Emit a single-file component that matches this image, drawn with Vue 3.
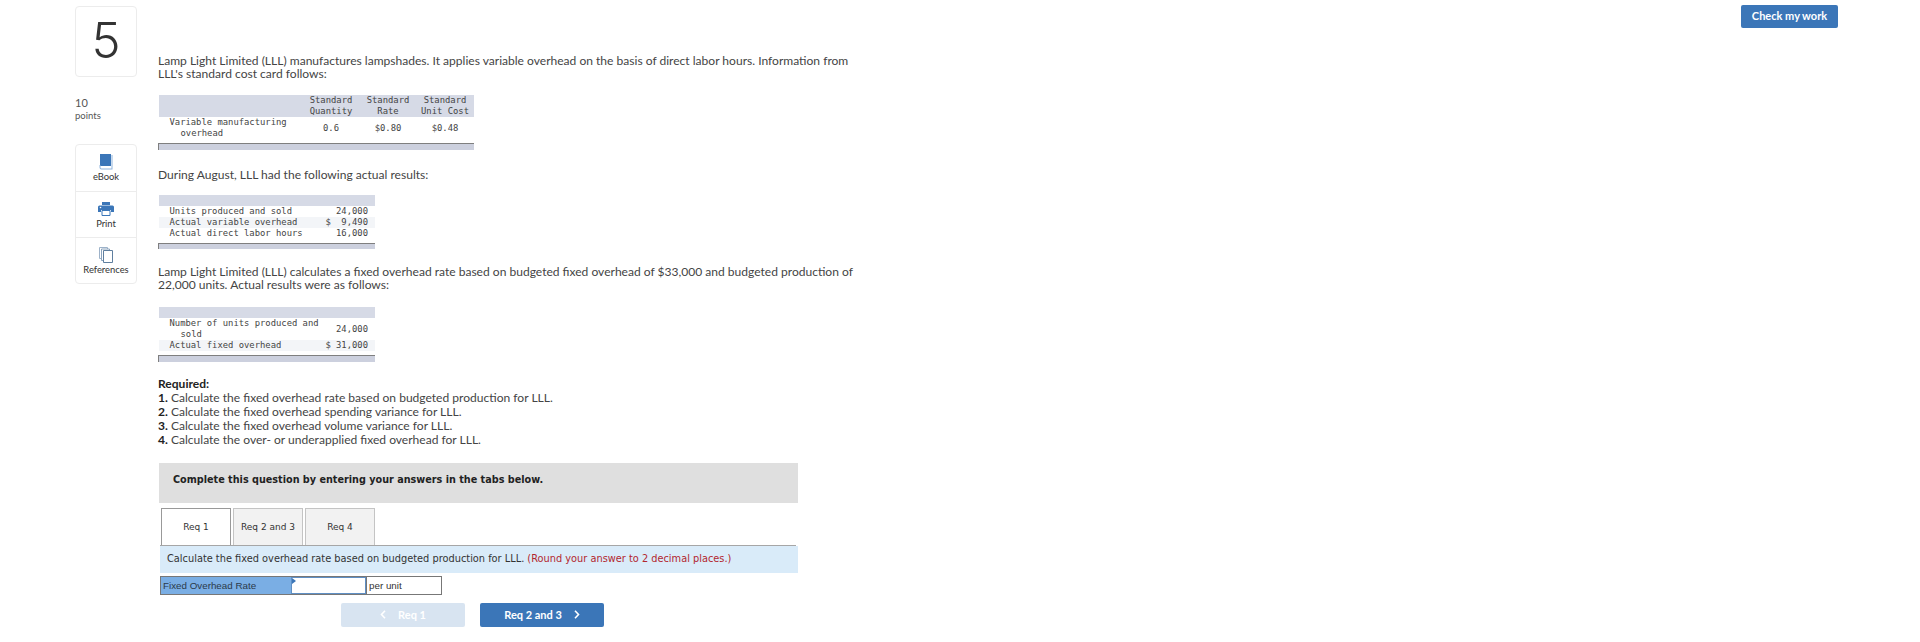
<script setup>
const tools = [
  { name: 'eBook', icon: 'book' },
  { name: 'Print', icon: 'print' },
  { name: 'References', icon: 'refs' },
];
const requirements = [
  'Calculate the fixed overhead rate based on budgeted production for LLL.',
  'Calculate the fixed overhead spending variance for LLL.',
  'Calculate the fixed overhead volume variance for LLL.',
  'Calculate the over- or underapplied fixed overhead for LLL.',
];
const tabs = ['Req 1', 'Req 2 and 3', 'Req 4'];
</script>

<template>
  <div class="page">
    <aside class="rail">
      <div class="number">5</div>
      <div class="points"><span>10</span><small>points</small></div>
      <div class="tools">
        <div v-for="tool in tools" :key="tool.name" class="tool">
          <svg v-if="tool.icon === 'book'" width="14" height="16" viewBox="0 0 14 16">
            <path d="M1 0h11v12H1z" fill="#3b76b8" />
            <path d="M12 1h1.500v14.500H2.500A2 2 0 0 1 .5 13.500V11h1v2.500a1 1 0 0 0 1 1H12.500V1z" fill="#8fb4dc" />
          </svg>
          <svg v-else-if="tool.icon === 'print'" width="16" height="14" viewBox="0 0 16 14">
            <path d="M4 0h8v3H4z" fill="#3b76b8" />
            <path d="M1.500 3.500h13a1.500 1.500 0 0 1 1.500 1.500v5h-3V8H3v2H0V5a1.500 1.500 0 0 1 1.500-1.500z" fill="#3b76b8" />
            <circle cx="2.500" cy="5.500" r=".8" fill="#fff" />
            <path d="M4 8.500h8v5H4z" fill="#fff" stroke="#3b76b8" />
          </svg>
          <svg v-else width="14" height="16" viewBox="0 0 14 16">
            <path d="M.5.500h8v11h-8z" fill="#fff" stroke="#9db2c9" />
            <path d="M2.500 2h8v11.500h-8z" fill="#fff" stroke="#8aa3bd" />
            <path d="M4.500 3.500h9v12h-9z" fill="#fff" stroke="#5f7f9f" />
          </svg>
          <span>{{ tool.name }}</span>
        </div>
      </div>
    </aside>

    <main class="question">
      <p class="text">Lamp Light Limited (LLL) manufactures lampshades. It applies variable overhead on the basis of direct labor hours. Information from LLL's standard cost card follows:</p>

      <table class="sheet wide">
        <thead>
          <tr>
            <th class="label"></th>
            <th>Standard<br>Quantity</th>
            <th>Standard<br>Rate</th>
            <th>Standard<br>Unit Cost</th>
          </tr>
        </thead>
        <tbody>
          <tr>
            <td class="label hang">Variable manufacturing overhead</td>
            <td class="mid">0.6</td>
            <td class="mid">$0.80</td>
            <td class="mid">$0.48</td>
          </tr>
        </tbody>
        <tfoot><tr><td colspan="4"></td></tr></tfoot>
      </table>

      <p class="text after-wide">During August, LLL had the following actual results:</p>

      <table class="sheet narrow">
        <thead><tr><th class="label blank"></th><th></th></tr></thead>
        <tbody>
          <tr><td class="label">Units produced and sold</td><td class="num">24,000</td></tr>
          <tr class="alt"><td class="label">Actual variable overhead</td><td class="num">$&nbsp;&nbsp;9,490</td></tr>
          <tr><td class="label">Actual direct labor hours</td><td class="num">16,000</td></tr>
        </tbody>
        <tfoot><tr><td colspan="2"></td></tr></tfoot>
      </table>

      <p class="text after-narrow">Lamp Light Limited (LLL) calculates a fixed overhead rate based on budgeted fixed overhead of $33,000 and budgeted production of 22,000 units. Actual results were as follows:</p>

      <table class="sheet narrow last">
        <thead><tr><th class="label blank"></th><th></th></tr></thead>
        <tbody>
          <tr><td class="label hang">Number of units produced and sold</td><td class="num">24,000</td></tr>
          <tr class="alt"><td class="label">Actual fixed overhead</td><td class="num">$ 31,000</td></tr>
        </tbody>
        <tfoot><tr><td colspan="2"></td></tr></tfoot>
      </table>

      <div class="required">
        <strong>Required:</strong>
        <div v-for="(req, i) in requirements" :key="i"><strong>{{ i + 1 }}.</strong> {{ req }}</div>
      </div>

      <div class="notice">Complete this question by entering your answers in the tabs below.</div>

      <div class="tabs">
        <div v-for="(tab, i) in tabs" :key="tab" class="tab" :class="{ active: i === 0 }">{{ tab }}</div>
      </div>
      <div class="prompt">Calculate the fixed overhead rate based on budgeted production for LLL. <em>(Round your answer to 2 decimal places.)</em></div>

      <div class="answer">
        <div class="answer-label">Fixed Overhead Rate</div>
        <div class="answer-input"><i class="flag"></i></div>
        <div class="answer-unit">per unit</div>
      </div>

      <div class="nav">
        <button class="btn off">
          <svg width="6" height="9" viewBox="0 0 6 9"><path d="M5 .8 1.500 4.500 5 8.200" fill="none" stroke="currentColor" stroke-width="1.600" /></svg>
          Req 1
        </button>
        <button class="btn">
          Req 2 and 3
          <svg width="6" height="9" viewBox="0 0 6 9"><path d="M1 .8 4.500 4.500 1 8.200" fill="none" stroke="currentColor" stroke-width="1.600" /></svg>
        </button>
      </div>
    </main>

    <div class="top-action"><button class="check">Check my work</button></div>
  </div>
</template>

<style scoped>
.page {
  display: flex;
  align-items: flex-start;
  height: 642px;
  padding-left: 75px;
  box-sizing: border-box;
  overflow: hidden;
  background: #fff;
  color: #333;
  font-family: Lato, "Open Sans", sans-serif;
}
.rail {
  width: 62px;
  flex: none;
  padding-top: 6px;
}
.number {
  height: 71px;
  box-sizing: border-box;
  border: 1px solid #ececec;
  border-radius: 4px;
  font-family: Inter, Lato, sans-serif;
  font-size: 49px;
  font-weight: 300;
  line-height: 68px;
  text-align: center;
  color: #333;
}
.points {
  margin-top: 19px;
  color: #555;
}
.points span {
  display: block;
  font-size: 11px;
  line-height: 13px;
}
.points small {
  display: block;
  font-size: 9.500px;
  line-height: 13px;
}
.tools {
  margin-top: 22px;
  border: 1px solid #ececec;
  border-radius: 4px;
}
.tool {
  height: 46px;
  box-sizing: border-box;
  display: flex;
  flex-direction: column;
  align-items: center;
  padding-top: 9px;
  font-size: 9.400px;
  line-height: 11px;
}
.tool + .tool {
  border-top: 1px solid #ececec;
}
.tool svg {
  height: 16px;
  margin-bottom: 1px;
}
.question {
  width: 700px;
  flex: none;
  margin-left: 21px;
  padding-top: 54px;
}
.text {
  margin: 0;
  width: 700px;
  font-size: 12.050px;
  line-height: 13px;
  color: #444;
}
.sheet {
  border-collapse: collapse;
  table-layout: fixed;
  font-family: "DejaVu Sans Mono", "Liberation Mono", monospace;
  font-size: 8.850px;
  line-height: 11px;
  color: #444;
}
.wide {
  width: 315px;
  margin-top: 15px;
}
.narrow {
  width: 217px;
  margin-top: 14px;
}
.narrow.last {
  margin-top: 16px;
}
.sheet th {
  padding: 0;
  background: #d6dae6;
  font-weight: 400;
  text-align: center;
  height: 11px;
}
.wide th:not(.label),
.wide td.mid {
  width: 57px;
  text-align: center;
}
.narrow .label {
  width: 166px;
}
.sheet td {
  padding: 0;
}
.sheet .label {
  padding-left: 11px;
  box-sizing: border-box;
}
.wide .label {
  width: 144px;
}
.hang {
  padding-left: 22px !important;
  text-indent: -11px;
}
.num {
  text-align: right;
  padding-right: 7px !important;
  white-space: nowrap;
}
.alt td {
  background: #f3f5f8;
}
.sheet tfoot td {
  height: 6px;
  background: #ccd0de;
  border-top: 1px solid #7f7f7f;
  border-left: 1px solid #7f7f7f;
  box-sizing: border-box;
}
.sheet tfoot::before {
  content: "";
  display: block;
  height: 4px;
}
.after-wide {
  margin-top: 18px;
}
.after-narrow {
  margin-top: 16px;
}
.required {
  margin-top: 15px;
  font-size: 12.050px;
  line-height: 14px;
  color: #444;
}
.required strong {
  color: #222;
}
.notice {
  width: 639px;
  height: 40px;
  margin: 16px 0 0 1px;
  box-sizing: border-box;
  padding: 10px 14px;
  background: #dfdfdf;
  font-family: "DejaVu Sans", Verdana, sans-serif;
  font-size: 9.660px;
  font-weight: 700;
  line-height: 14px;
  color: #222;
}
.tabs {
  display: flex;
  gap: 2px;
  width: 636px;
  margin: 5px 0 0 2px;
  padding-left: 1px;
  height: 37px;
  box-sizing: border-box;
  box-shadow: 0 1px 0 #a6a6a6;
}
.tab {
  width: 70px;
  height: 37px;
  box-sizing: border-box;
  border: 1px solid #c4c4c4;
  border-bottom: 0;
  background: #f2f2f2;
  font-family: "DejaVu Sans", Verdana, sans-serif;
  font-size: 9px;
  line-height: 36px;
  text-align: center;
  color: #333;
}
.tab.active {
  position: relative;
  background: #fff;
  border-color: #999;
  z-index: 1;
}
.prompt {
  width: 638px;
  height: 27px;
  margin: 1px 0 0 2px;
  box-sizing: border-box;
  padding-left: 7px;
  background: #d9ebf9;
  font-family: "DejaVu Sans", Verdana, sans-serif;
  font-size: 9.800px;
  line-height: 26px;
  color: #333;
  white-space: nowrap;
}
.prompt em {
  font-style: normal;
  color: #b3262e;
}
.answer {
  display: flex;
  width: 282px;
  height: 19px;
  margin: 3px 0 0 2px;
  box-sizing: border-box;
  border: 1px solid #777;
  font-family: "Liberation Sans", Arial, sans-serif;
  font-size: 9.800px;
  line-height: 17px;
}
.answer-label {
  width: 130px;
  padding-left: 2px;
  box-sizing: border-box;
  background: #7aaee4;
  color: #2b3a4a;
}
.answer-input {
  position: relative;
  width: 75px;
  box-sizing: border-box;
  border: 1px solid #5f8fc4;
  background: #fff;
}
.flag {
  position: absolute;
  top: 0;
  left: 0;
  border-top: 3px solid transparent;
  border-bottom: 3px solid transparent;
  border-left: 4px solid #3b76b8;
}
.answer-unit {
  flex: 1;
  padding-left: 2px;
  border-left: 1px solid #777;
  color: #333;
}
.nav {
  display: flex;
  gap: 15px;
  margin: 8px 0 0 183px;
}
.btn,
.check {
  border: 0;
  border-radius: 2px;
  background: #3b76b8;
  color: #fff;
  font-family: Lato, sans-serif;
  font-weight: 700;
  padding: 0;
}
.btn {
  display: flex;
  align-items: center;
  justify-content: center;
  gap: 12px;
  width: 124px;
  height: 24px;
  font-size: 11px;
}
.btn.off {
  background: #d8e4f1;
}
.top-action {
  margin-left: auto;
  padding: 5px 82px 0 0;
}
.check {
  display: block;
  width: 97px;
  height: 23px;
  padding-bottom: 2px;
  font-size: 11px;
}
</style>
